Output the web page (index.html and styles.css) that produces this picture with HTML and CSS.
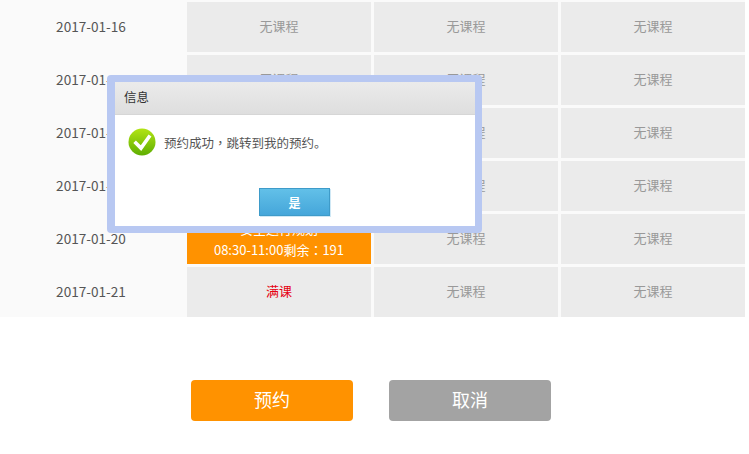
FILE: index.html
```html
<!DOCTYPE html>
<html lang="zh-CN">

<head>
  <meta charset="UTF-8">
  <title>预约</title>
  <link rel="stylesheet" href="styles.css">
</head>

<body>
  <div class="schedule">
    <div class="date">2017-01-16</div>
    <div class="cell">无课程</div>
    <div class="cell">无课程</div>
    <div class="cell">无课程</div>

    <div class="date">2017-01-17</div>
    <div class="cell">无课程</div>
    <div class="cell">无课程</div>
    <div class="cell">无课程</div>

    <div class="date">2017-01-18</div>
    <div class="cell">无课程</div>
    <div class="cell">无课程</div>
    <div class="cell">无课程</div>

    <div class="date">2017-01-19</div>
    <div class="cell">无课程</div>
    <div class="cell">无课程</div>
    <div class="cell">无课程</div>

    <div class="date">2017-01-20</div>
    <div class="cell picked">
      <div>安全运行规划<br>08:30-11:00剩余<span class="punct" lang="zh-TW">：</span>191</div>
    </div>
    <div class="cell">无课程</div>
    <div class="cell">无课程</div>

    <div class="date">2017-01-21</div>
    <div class="cell full">满课</div>
    <div class="cell">无课程</div>
    <div class="cell">无课程</div>
  </div>

  <div class="actions">
    <button class="btn btn-ok">预约</button>
    <button class="btn btn-cancel">取消</button>
  </div>

  <div class="dialog">
    <div class="dialog-title">信息</div>
    <div class="dialog-body">
      <svg class="dialog-icon" width="28" height="28" viewBox="0 0 28 28">
        <defs>
          <linearGradient id="okgrad" x1="0" y1="0" x2="0" y2="1">
            <stop offset="0" stop-color="#b2e414" />
            <stop offset="1" stop-color="#5fae02" />
          </linearGradient>
        </defs>
        <circle cx="14" cy="14" r="13.5" fill="url(#okgrad)" />
        <path d="M6.6 13.7l6.4 6.4 9-12.6" fill="none" stroke="#fff" stroke-width="3.6" />
      </svg>
      <span>预约成功<span class="punct" lang="zh-TW">，</span>跳转到我的预约。</span>
    </div>
    <div class="dialog-foot">
      <button class="dialog-btn">是</button>
    </div>
  </div>
</body>

</html>
```

FILE: styles.css
```css
* {
  margin: 0px;
  padding: 0px;
  box-sizing: border-box;
  font-family: "Noto Sans CJK SC", sans-serif;
}

body {
  background-color: white;
  width: 749px;
  height: 454px;
  overflow: hidden;
}

.schedule {
  display: grid;
  grid-template-columns: 184px 184px 184px 184px;
  grid-auto-rows: 50px;
  gap: 3px;
  width: 745px;
  padding: 2px 0px 0px 0px;
  background-color: #fafafa;
}

.date {
  display: flex;
  align-items: center;
  justify-content: center;
  padding: 0px 2px 2px 0px;
  font-size: 13.6px;
  color: #555555;
}

.cell {
  display: flex;
  align-items: center;
  justify-content: center;
  padding-bottom: 4px;
  text-align: center;
  font-size: 13px;
  line-height: 21px;
  color: #999999;
  background-color: #ebebeb;
}

/* comma and colon sit in the middle of their box in the reference */
.punct {
  font-family: "Noto Sans CJK TC", sans-serif;
}

.picked {
  padding-bottom: 0px;
  color: white;
  background-color: #ff9200;
}

.full {
  color: #e60012;
}

.actions {
  display: flex;
  gap: 36px;
  margin: 63px 0px 0px 191px;
}

.btn {
  width: 162px;
  height: 41px;
  padding-bottom: 4px;
  border: none;
  border-radius: 4px;
  font-size: 18px;
  color: white;
}

.btn-ok {
  background-color: #ff9200;
}

.btn-cancel {
  background-color: #a3a3a3;
}

.dialog {
  position: absolute;
  left: 107px;
  top: 75px;
  width: 375px;
  height: 158px;
  border: 7px solid #b8c8f2;
  border-left-width: 8px;
  border-radius: 4px;
  background-color: white;
}

.dialog-title {
  height: 33px;
  padding-left: 9px;
  font-size: 12.5px;
  line-height: 29px;
  color: #333333;
  background: linear-gradient(#ebebeb, #dedede);
  border-bottom: 1px solid #d6d6d6;
}

.dialog-body {
  display: flex;
  align-items: center;
  gap: 8px;
  padding: 13px 0px 0px 13px;
  font-size: 12.5px;
  color: #555555;
}

.dialog-foot {
  display: flex;
  justify-content: center;
  padding: 32px 1px 0px 0px;
}

.dialog-btn {
  width: 71px;
  height: 28px;
  font-size: 12px;
  font-weight: 700;
  color: white;
  border: 1px solid #3e9bc9;
  background: linear-gradient(#62c0e8, #45a6da);
  box-shadow: 1px 1px 0px #cfe8f5;
}
```
